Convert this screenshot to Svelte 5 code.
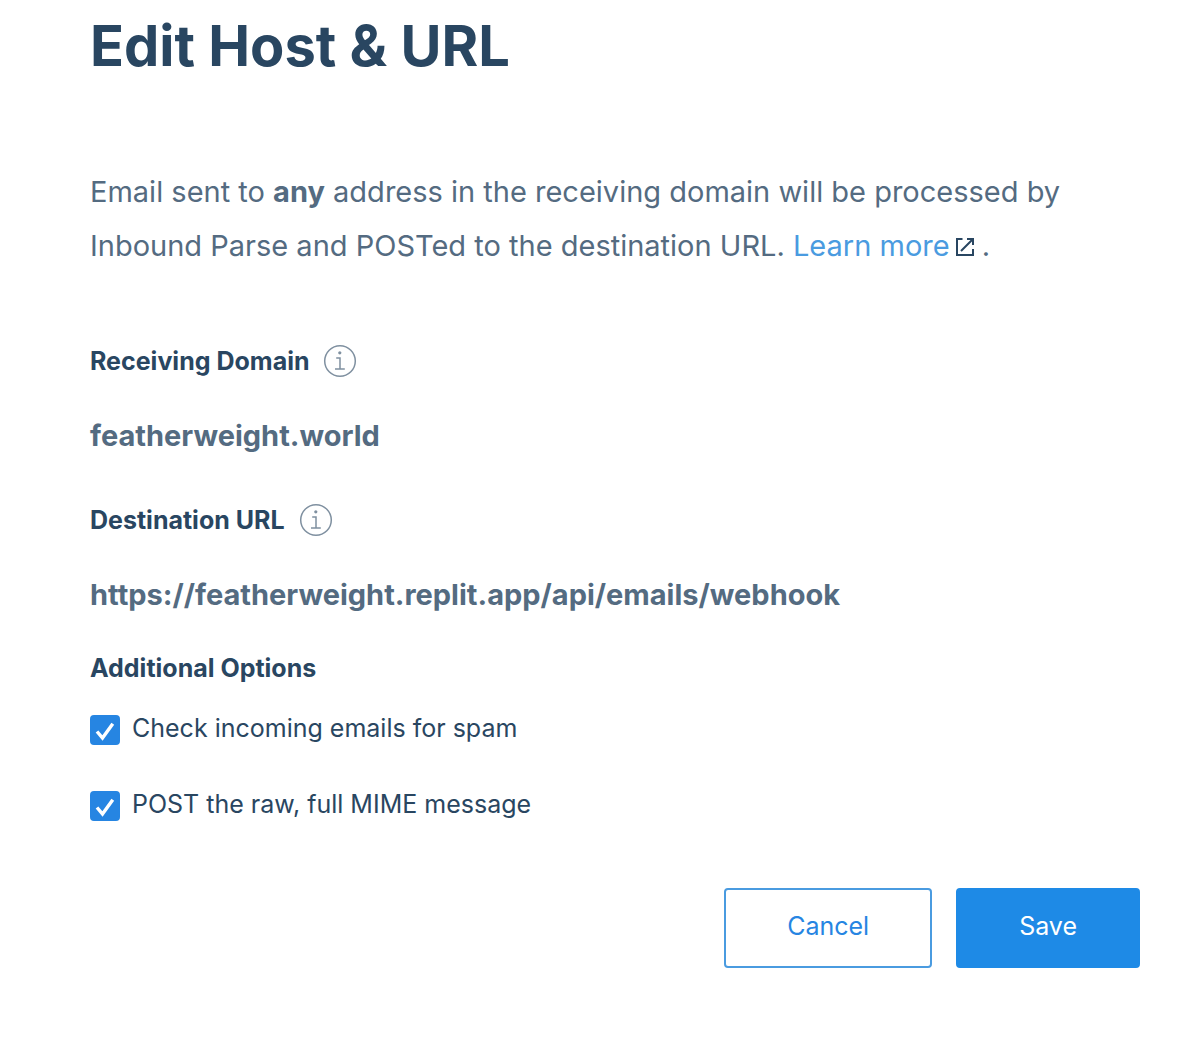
<script>
  let spam = $state(true);
  let raw = $state(true);
</script>

{#snippet info(label)}
  <button class="info" type="button" aria-label={label}>
    <svg viewBox="0 0 34 34" aria-hidden="true">
      <circle cx="17" cy="17" r="15.3" />
      <path d="M13.2 14H17V25M12 25H21.8" />
      <circle class="dot" cx="16.8" cy="8.8" r="1.6" />
    </svg>
  </button>
{/snippet}

{#snippet tick()}
  <svg class="tick" viewBox="0 0 30 30" aria-hidden="true"><path d="M7 16.5L12.5 23L22.8 8.8" /></svg>
{/snippet}

<main>
  <h1>Edit Host &amp; URL</h1>
  <p class="intro">
    Email sent to <strong>any</strong> address in the receiving domain will be processed by Inbound Parse and POSTed to the destination URL.
    <a href="#learn-more">Learn more<svg class="external" viewBox="0 0 18 18" aria-hidden="true"><path d="M6.5 1H1V17H17V11M11 1H17V7M17 1L5 13" /></svg></a> .
  </p>

  <form onsubmit={(e) => e.preventDefault()}>
    <section class="field">
      <h2>Receiving Domain {@render info('About receiving domain')}</h2>
      <p>featherweight.world</p>
    </section>
    <section class="field">
      <h2>Destination URL {@render info('About destination URL')}</h2>
      <p>https://featherweight.replit.app/api/emails/webhook</p>
    </section>
    <fieldset>
      <legend>Additional Options</legend>
      <label><span class="box"><input type="checkbox" bind:checked={spam} />{@render tick()}</span><span>Check incoming emails for spam</span></label>
      <label><span class="box"><input type="checkbox" bind:checked={raw} />{@render tick()}</span><span>POST the raw, full MIME message</span></label>
    </fieldset>
    <div class="actions">
      <button class="cancel" type="button">Cancel</button>
      <button class="save" type="submit">Save</button>
    </div>
  </form>
</main>

<style>
  :global(body) { background: #fff; }
  main { box-sizing: border-box; padding: 10px 50px 80px 90px; font-family: Inter, "Liberation Sans", sans-serif; color: #294661; }
  h1, h2, p { margin: 0; }
  h1 { font-size: 56px; line-height: 72px; font-weight: 700; }
  .intro { margin-top: 83px; font-size: 29px; line-height: 54px; color: #546b81; }
  a { color: #4a9be0; text-decoration: none; }
  .external { width: 18px; height: 18px; margin-left: 6px; fill: none; stroke: #294661; stroke-width: 2; }
  .field { margin-top: 68px; }
  .field + .field { margin-top: 43px; }
  h2, legend { font-size: 25px; line-height: 40px; font-weight: 700; }
  h2 { display: flex; align-items: center; gap: 14px; }
  .field p { margin-top: 34px; font-size: 29px; line-height: 42px; font-weight: 700; color: #546b81; }
  .info { width: 34px; height: 34px; padding: 0; border: 0; background: none; cursor: pointer; }
  .info svg { display: block; fill: none; stroke: #7f90a0; stroke-width: 1.5; }
  .info .dot { fill: #7f90a0; stroke: none; }
  fieldset { margin: 32px 0 0; padding: 0; border: 0; }
  legend { padding: 0; }
  label { display: flex; align-items: flex-end; gap: 12px; margin-top: 23px; font-size: 25px; line-height: 34px; cursor: pointer; }
  label + label { margin-top: 42px; }
  .box { display: grid; width: 30px; height: 30px; }
  input { grid-area: 1 / 1; box-sizing: border-box; appearance: none; width: 30px; height: 30px; margin: 0; border: 2px solid #2685e2; border-radius: 4px; background: #fff; cursor: pointer; }
  input:checked { background: #2685e2; }
  .tick { grid-area: 1 / 1; width: 30px; height: 30px; fill: none; stroke: #fff; stroke-width: 3.4; pointer-events: none; }
  .actions { display: flex; justify-content: flex-end; gap: 24px; margin-top: 67px; }
  .actions button { height: 80px; padding: 0 61px 4px; border: 2px solid #4a9be0; border-radius: 4px; background: #fff; color: #2685e2; font-family: inherit; font-size: 25px; cursor: pointer; }
  .actions .save { border-color: #1e8ae6; background: #1e8ae6; color: #fff; }
</style>
